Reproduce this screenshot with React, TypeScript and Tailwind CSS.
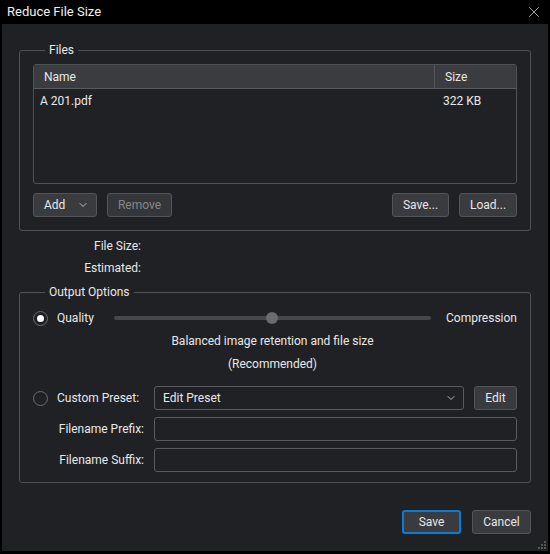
import { ChevronDown, X } from 'lucide-react';

const font = { fontFamily: 'Roboto, "Noto Sans", sans-serif' };

function Radio({ checked }: { checked?: boolean }) {
  return (
    <span className="flex h-[15px] w-[15px] shrink-0 items-center justify-center rounded-full border-[1.5px] border-[#6c6d70]">
      {checked && <span className="h-[7px] w-[7px] rounded-full bg-white" />}
    </span>
  );
}

function Button({ children, disabled, primary, className = '' }: { children: React.ReactNode; disabled?: boolean; primary?: boolean; className?: string }) {
  return (
    <button
      className={`flex h-[24px] items-center justify-center rounded-[3px] text-[12px] ${
        primary ? 'border-2 border-[#0b7bd6]' : 'border border-[#535457]'
      } ${disabled ? 'bg-[#353639] text-[#85868a]' : 'bg-[#3a3b3e] text-[#e8e8e8]'} ${className}`}
    >
      {children}
    </button>
  );
}

function Input({ children, className = '' }: { children?: React.ReactNode; className?: string }) {
  return (
    <div className={`flex h-[24px] items-center rounded-[3px] border border-[#5b5c60] bg-[#202124] ${className}`}>
      {children}
    </div>
  );
}

export default function App() {
  return (
    <div className="flex h-[554px] w-[550px] flex-col bg-black text-[12px] text-[#e8e8e8]" style={font}>
      {/* Title bar */}
      <div className="flex h-[24px] shrink-0 items-center justify-between pl-[7px] pr-[7px]">
        <span className="text-[13px] text-[#f0f0f0]">Reduce File Size</span>
        <X className="h-[18px] w-[18px] text-[#d8d8d8]" strokeWidth={1} />
      </div>

      {/* Body */}
      <div className="relative mx-[2px] flex h-[527px] flex-col bg-[#202124] px-[17px] pt-[19px]">
        <fieldset className="rounded-[3px] border border-[#505155] px-[13px] pb-[13px] pt-[7px]">
          <legend className="ml-[12px] px-[4px] leading-[14px]">Files</legend>
          <div className="flex h-[120px] flex-col overflow-hidden rounded-[3px] border border-[#505155]">
            <div className="flex h-[24px] shrink-0 border-b border-[#5a5b5e] bg-[#3b3c3f]">
              <div className="flex flex-1 items-center border-r border-[#55565a] pl-[10px]">Name</div>
              <div className="flex w-[81px] items-center pl-[10px]">Size</div>
            </div>
            <div className="flex h-[24px] items-center">
              <div className="flex-1 pl-[6px]">A 201.pdf</div>
              <div className="w-[73px]">322 KB</div>
            </div>
          </div>
          <div className="mt-[9px] flex items-center">
            <Button className="w-[64px]">
              <span className="flex w-full items-center justify-between pl-[10px] pr-[7px]">
                <span>Add</span>
                <ChevronDown className="h-[12px] w-[12px]" strokeWidth={1.5} />
              </span>
            </Button>
            <Button disabled className="ml-[10px] w-[65px]">Remove</Button>
            <div className="flex-1" />
            <Button className="w-[57px]">Save...</Button>
            <Button className="ml-[10px] w-[58px]">Load...</Button>
          </div>
        </fieldset>

        <div className="mt-[4px] flex flex-col">
          <div className="flex h-[22px] w-[122px] items-center justify-end">File Size:</div>
          <div className="flex h-[22px] w-[122px] items-center justify-end">Estimated:</div>
        </div>

        <fieldset className="mt-[6px] rounded-[3px] border border-[#505155] px-[13px] pb-[10px] pt-[7px]">
          <legend className="ml-[12px] px-[4px] leading-[14px]">Output Options</legend>
          <div className="grid grid-cols-[81px_1fr_auto]">
            <div className="flex h-[24px] items-center gap-[9px]">
              <Radio checked />
              <span>Quality</span>
            </div>
            <div className="relative flex h-[24px] items-center">
              <div className="h-[4px] w-full rounded-full bg-[#47484b]" />
              <div className="absolute left-1/2 h-[12px] w-[12px] -translate-x-1/2 rounded-full bg-[#6a6b6e]" />
            </div>
            <div className="ml-[15px] flex h-[24px] items-center">Compression</div>
            <div className="col-start-2 flex h-[22px] items-center justify-center">Balanced image retention and file size</div>
            <div className="col-start-2 flex h-[24px] items-center justify-center">(Recommended)</div>
          </div>

          <div className="mt-[10px] grid grid-cols-[111px_1fr] gap-x-[10px] gap-y-[7px]">
            <div className="flex h-[24px] items-center gap-[9px]">
              <Radio />
              <span>Custom Preset:</span>
            </div>
            <div className="flex gap-[10px]">
              <Input className="flex-1 justify-between pl-[8px] pr-[6px]">
                <span>Edit Preset</span>
                <ChevronDown className="h-[12px] w-[12px]" strokeWidth={1.5} />
              </Input>
              <Button className="w-[43px]">Edit</Button>
            </div>
            <div className="flex h-[24px] items-center justify-end">Filename Prefix:</div>
            <Input />
            <div className="flex h-[24px] items-center justify-end">Filename Suffix:</div>
            <Input />
          </div>
        </fieldset>

        <div className="mt-[27px] flex justify-end gap-[11px]">
          <Button primary className="w-[59px]">Save</Button>
          <Button className="w-[59px]">Cancel</Button>
        </div>

        {/* Resize grip */}
        <svg className="absolute bottom-[1px] right-[1px]" width="10" height="10" viewBox="0 0 10 10">
          <rect x="7" y="1" width="2" height="2" fill="#55565a" />
          <rect x="4" y="4" width="2" height="2" fill="#55565a" />
          <rect x="7" y="4" width="2" height="2" fill="#55565a" />
          <rect x="1" y="7" width="2" height="2" fill="#55565a" />
          <rect x="4" y="7" width="2" height="2" fill="#55565a" />
          <rect x="7" y="7" width="2" height="2" fill="#55565a" />
        </svg>
      </div>
    </div>
  );
}
